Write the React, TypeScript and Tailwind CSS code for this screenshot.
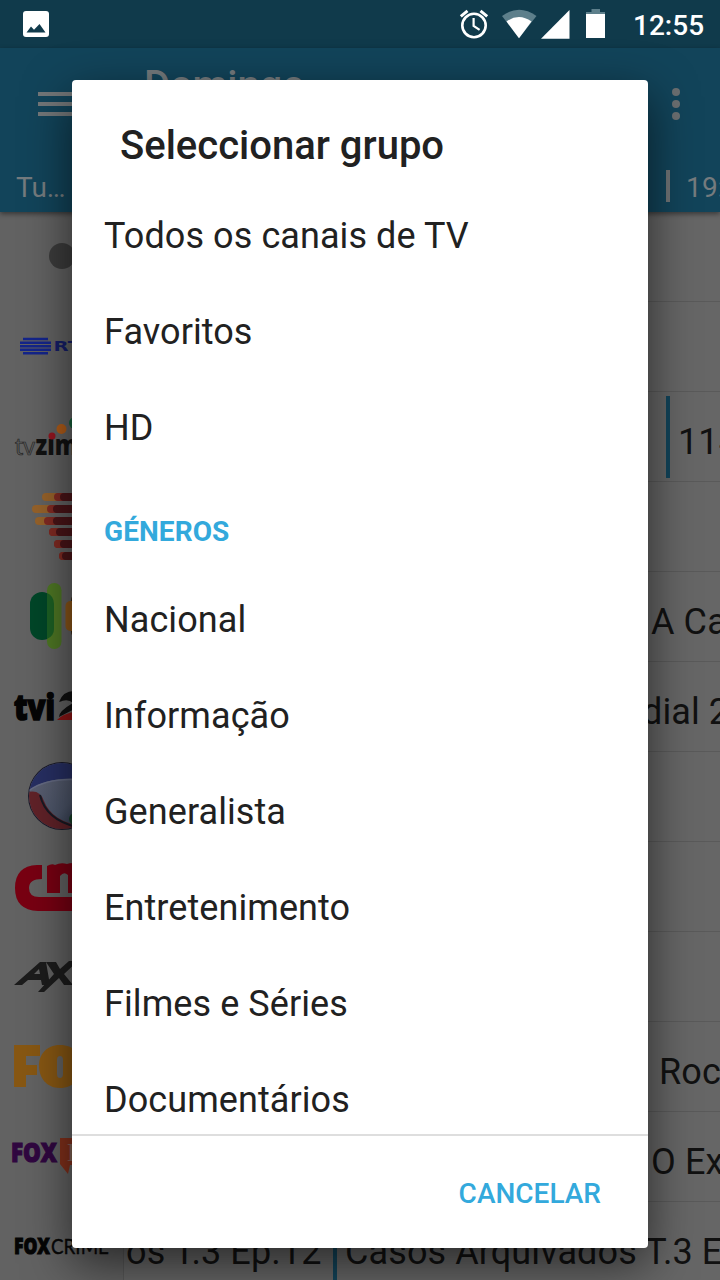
import React from "react";

const genres = ["Nacional", "Informação", "Generalista", "Entretenimento", "Filmes e Séries", "Documentários"];

function StatusBar() {
  return (
    <header className="flex h-12 shrink-0 items-center bg-[#103a4b] pl-[23px] text-white">
      <svg width="26" height="26" viewBox="0 0 26 26">
        <rect width="26" height="26" rx="3" fill="#fff" />
        <path d="M3.500 21.500 8 15.500l3 3.300L16.500 13 22.500 21.500z" fill="#103a4b" />
      </svg>
      <svg className="ml-auto" width="148" height="48" viewBox="0 0 148 48">
        <g fill="none" stroke="#fff" strokeWidth="2.600">
          <circle cx="16" cy="25.500" r="11.700" />
          <path d="M15.600 18v7.800l6 4" strokeWidth="2.200" />
          <path d="M2.800 16.300 9.500 10.900M22.500 10.900l6.700 5.400" strokeWidth="3" />
        </g>
        <path d="M44 16Q61 3.500 78.500 16L61 38z" fill="#5d7f8b" />
        <path d="M48.500 21.500Q61 12.500 73.500 21.500L61 38.200z" fill="#fff" />
        <path d="M111.500 10v28.700H83z" fill="#fff" />
        <path d="M133.500 9h8.500v3h5v3h-19v-3h5.500z" fill="#5d7f8b" />
        <path d="M128 14h19v24h-19z" fill="#fff" />
      </svg>
      <span className="ml-[27px] w-[87px] whitespace-nowrap pt-[3px] text-[28px] font-medium leading-none">12:55</span>
    </header>
  );
}

function AppBar() {
  return (
    <div className="relative z-10 flex h-[164px] shrink-0 flex-col bg-[#12445a] text-[#757b7e] shadow-[0_2px_5px_rgba(0,0,0,0.45)]">
      <div className="flex h-[112px] items-center">
        <div className="ml-[38px] flex w-9 flex-col gap-[6px]">
          <i className="h-1 bg-[#737779]" />
          <i className="h-1 bg-[#737779]" />
          <i className="h-1 bg-[#737779]" />
        </div>
        <span className="ml-[70px] pb-[36px] text-[40px] font-medium leading-none tracking-[-0.1px]">Domingo</span>
        <div className="ml-auto mr-10 flex flex-col gap-1">
          <i className="size-2 rounded-full bg-[#6b6f71]" />
          <i className="size-2 rounded-full bg-[#6b6f71]" />
          <i className="size-2 rounded-full bg-[#6b6f71]" />
        </div>
      </div>
      <div className="flex h-[52px] items-center pl-4 text-[28px] leading-none">
        <span className="pt-[3px]">Tu…</span>
        <span className="mb-0 ml-auto h-8 w-1 bg-[#707476]" />
        <span className="w-[50px] whitespace-nowrap pl-4 pt-[3px] tracking-[0.2px]">19:00</span>
      </div>
    </div>
  );
}

function Dot() {
  return <svg width="123" height="89" viewBox="0 0 123 89"><circle cx="62" cy="44" r="13" fill="#3c3c3c" /></svg>;
}

function Rtp() {
  return (
    <svg width="123" height="89" viewBox="0 0 123 89">
      <path d="M23 37h25M20 40.700h31M20 44.200h31M20 47.700h31M23 51.200h25" stroke="#14258a" strokeWidth="2.400" />
      <text x="53.500" y="49" textLength="42" lengthAdjust="spacingAndGlyphs" fontFamily="DejaVu Sans" fontWeight="700" fontSize="13.500" fill="#151e68">RTP</text>
    </svg>
  );
}

function Zimbo() {
  return (
    <svg width="123" height="89" viewBox="0 0 123 89">
      <g fontFamily="Open Sans">
        <text x="15" y="62.500" textLength="20" lengthAdjust="spacingAndGlyphs" fontSize="24" fill="#5d5d5d" stroke="#262626" strokeWidth="0.700">tv</text>
        <text x="35.500" y="62.500" textLength="72" lengthAdjust="spacingAndGlyphs" fontSize="29" fill="#111" fontWeight="800">zimbo</text>
      </g>
      <path d="M48 38h9v8h-9z" fill="#606060" />
      <circle cx="52" cy="44" r="3.500" fill="#941520" />
      <circle cx="61.500" cy="37" r="5" fill="#b05c18" />
      <circle cx="75" cy="31" r="6" fill="#17603a" />
    </svg>
  );
}

function Bars() {
  const rows = [[42, 54, 60, 15], [32, 47, 53, 27], [35, 44, 53, 39], [49, 49, 56, 50], [54, 54, 60, 62], [59, 59, 62, 74]];
  return (
    <svg width="123" height="89" viewBox="0 0 123 89">
      {rows.map(([a, b, c, y]) => (
        <g key={y}>
          <rect x={a} y={y - 4} width="60" height="8" rx="4" fill={a === b ? "#7c2620" : "#96622a"} />
          <rect x={b} y={y - 4} width="50" height="8" rx="4" fill="#802a22" />
          <rect x={c} y={y - 4} width="50" height="8" rx="4" fill="#4a1417" />
        </g>
      ))}
    </svg>
  );
}

function Pills() {
  return (
    <svg width="123" height="89" viewBox="0 0 123 89">
      <rect x="30" y="20" width="24" height="48" rx="12" fill="#004628" />
      <rect x="47" y="11" width="14.500" height="66" rx="7.250" fill="#4e7724" />
      <path d="M47 21q7 3 7 11v25q0 7-7 10z" fill="#1c6024" />
      <rect x="71" y="22" width="18" height="44" rx="6" fill="#3b2814" />
      <rect x="65.500" y="29" width="20" height="30" rx="5" fill="#8c5618" />
    </svg>
  );
}

function Tvi() {
  return (
    <svg width="123" height="89" viewBox="0 0 123 89">
      <text x="14" y="58" textLength="41" lengthAdjust="spacingAndGlyphs" fontFamily="Open Sans" fontSize="36" fontWeight="800" fill="#050505" stroke="#050505" strokeWidth="1.600">tvi</text>
      <path d="M59 40q4-11 15-11 13 0 12 12L59 55q0-6 14-14-5-5-14-1z" fill="#101010" />
      <path d="M57 58q5-6 20-9v9z" fill="#8c1515" />
    </svg>
  );
}

function Globe() {
  return (
    <svg width="123" height="89" viewBox="0 0 123 89">
      <defs>
        <clipPath id="globe"><circle cx="62" cy="44" r="33" /></clipPath>
        <linearGradient id="glass" x2="1" y2="1"><stop stopColor="#626576" /><stop offset=".6" stopColor="#4c5569" /><stop offset="1" stopColor="#1b2539" /></linearGradient>
      </defs>
      <circle cx="62" cy="44" r="34" fill="#191929" />
      <g clipPath="url(#globe)">
        <path d="M28 10h70v68H28z" fill="url(#glass)" />
        <path d="M27 40Q48 22 92 28V6H27z" fill="#272f63" />
        <path d="M27 40Q48 23 92 29" fill="none" stroke="#656b83" strokeWidth="1.500" />
        <path d="M28 40q12-3 16 9 8 21 39 25v10H28z" fill="#602228" />
        <path d="M40 43q6 25 37 32" fill="none" stroke="#171923" strokeWidth="2" />
        <circle cx="75" cy="67" r="6" fill="#173f27" />
      </g>
    </svg>
  );
}

function Cm() {
  return (
    <svg width="123" height="89" viewBox="0 0 123 89">
      <path d="M42 23H37Q15 24 15 46q0 22 23 23h62V55H39q-10 0-10-9t13-9zM47 51V24q5-3 8-1 6-3 12-1 5-2 16 0v29H68V33q-4-4-8 1v17z" fill="#780012" />
    </svg>
  );
}

function Axn() {
  return (
    <svg width="123" height="89" viewBox="0 0 123 89">
      <g transform="translate(0 -1)" fill="#1c1c1c">
        <path d="M14 54 40 31h6l4 23h-8l-1-5H28l-6 5zM34 43h6l-1-5z" fillRule="evenodd" />
        <path d="M46 31h10l4 7 9-8h9L64 43l9 11h-9l-5-7-15 14h-6l16-18z" />
      </g>
    </svg>
  );
}

function Fox() {
  return (
    <svg width="123" height="89" viewBox="0 0 123 89">
      <path d="M14 23h26v11H26v9h11v10H26v12H14z" fill="#875713" />
      <path d="M60 23c-14 0-21 10-21 21s7 22 21 22 21-10 21-22-7-21-21-21zm0 11q3 0 3 4v14q0 4-3 4t-3-4V38q0-4 3-4z" fill="#875713" fillRule="evenodd" />
    </svg>
  );
}

function FoxLife() {
  return (
    <svg width="123" height="89" viewBox="0 0 123 89">
      <text x="11" y="50" textLength="46" lengthAdjust="spacingAndGlyphs" fontFamily="Open Sans" fontSize="26" fontWeight="800" fill="#300740" stroke="#300740" strokeWidth="1.200">FOX</text>
      <path d="M60 26h40v27H70l-2 9-8-10z" fill="#82301b" />
      <text x="67" y="49" fontFamily="Liberation Serif" fontSize="25" fill="#806258">L</text>
    </svg>
  );
}

function FoxCrime() {
  return (
    <svg width="123" height="79" viewBox="0 0 123 79">
      <text x="14" y="52" textLength="36" lengthAdjust="spacingAndGlyphs" fontFamily="Open Sans" fontSize="22" fontWeight="800" fill="#050505" stroke="#050505" strokeWidth="1">FOX</text>
      <text x="51" y="52" textLength="58" lengthAdjust="spacingAndGlyphs" fontFamily="Lato" fontSize="22" fill="#080808" stroke="#080808" strokeWidth="0.400">CRIME</text>
    </svg>
  );
}

function Channel({ logo, children }: { logo: React.ReactNode; children?: React.ReactNode }) {
  return (
    <div className="flex h-[90px] shrink-0">
      <div className="w-[124px] shrink-0 border-r border-[#585858] bg-[#626262]">{logo}</div>
      <div className="flex min-w-0 flex-1 items-center overflow-hidden whitespace-nowrap border-b border-[#5a5a5a] bg-[#666] pt-[10px] text-[36px] leading-[44px] tracking-[0.1px] text-[#111]">{children}</div>
    </div>
  );
}

function Guide() {
  return (
    <main className="flex flex-1 flex-col overflow-hidden bg-[#666]">
      <Channel logo={<Dot />} />
      <Channel logo={<Rtp />} />
      <Channel logo={<Zimbo />}>
        <span className="-mt-[10px] ml-[542px] h-[82px] w-1 shrink-0 bg-[#12445a]" />
        <span className="ml-2">114</span>
      </Channel>
      <Channel logo={<Bars />} />
      <Channel logo={<Pills />}><span className="ml-[527px]">A Casa</span></Channel>
      <Channel logo={<Tvi />}><span className="ml-[518px]">dial 2018</span></Channel>
      <Channel logo={<Globe />} />
      <Channel logo={<Cm />} />
      <Channel logo={<Axn />} />
      <Channel logo={<Fox />}><span className="ml-[535px]">Rock</span></Channel>
      <Channel logo={<FoxLife />}><span className="ml-[527px]">O Exótico</span></Channel>
      <Channel logo={<FoxCrime />}>
        <span className="ml-[2px] w-[207px] shrink-0">os T.3 Ep.12</span>
        <span className="-mt-[10px] h-[82px] w-1 shrink-0 bg-[#12445a]" />
        <span className="ml-2">Casos Arquivados T.3 Ep.13</span>
      </Channel>
    </main>
  );
}

function Option({ label }: { label: string }) {
  return <li className="flex h-24 shrink-0 items-center">{label}</li>;
}

function GroupDialog() {
  return (
    <section role="dialog" className="absolute left-[72px] top-20 z-20 flex h-[1168px] w-[576px] flex-col overflow-hidden rounded-[4px] bg-white text-[#212121] shadow-[0_16px_48px_rgba(0,0,0,0.6)]">
      <h1 className="h-[108px] shrink-0 pl-12 pt-[42px] text-[40px] font-medium leading-[47px]">Seleccionar grupo</h1>
      <ul className="flex min-h-0 flex-1 flex-col overflow-hidden pl-8 text-[36px] leading-none tracking-[0.08px]">
        <Option label="Todos os canais de TV" />
        <Option label="Favoritos" />
        <Option label="HD" />
        <li className="flex h-24 shrink-0 items-center pt-4 text-[28px] font-bold tracking-[0.08px] text-[#33a9dc]">GÉNEROS</li>
        {genres.map((label) => <Option key={label} label={label} />)}
      </ul>
      <footer className="flex h-[114px] shrink-0 items-center justify-end border-t-2 border-[#dedede] pr-[47px] pt-1">
        <button className="text-[28px] font-medium leading-none text-[#33a9dc]">CANCELAR</button>
      </footer>
    </section>
  );
}

export default function App() {
  return (
    <div className="relative flex h-[1280px] w-[720px] flex-col overflow-hidden font-[Roboto,sans-serif]">
      <StatusBar />
      <AppBar />
      <Guide />
      <GroupDialog />
    </div>
  );
}
